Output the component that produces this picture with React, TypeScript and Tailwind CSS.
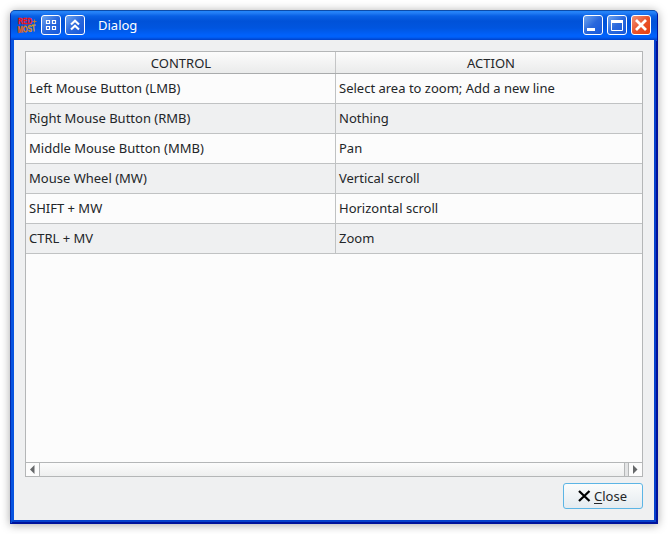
import React from "react";

const rows: [string, string][] = [
  ["Left Mouse Button (LMB)", "Select area to zoom; Add a new line"],
  ["Right Mouse Button (RMB)", "Nothing"],
  ["Middle Mouse Button (MMB)", "Pan"],
  ["Mouse Wheel (MW)", "Vertical scroll"],
  ["SHIFT + MW", "Horizontal scroll"],
  ["CTRL + MV", "Zoom"],
];

function AppLogo() {
  return (
    <svg width="20" height="22" viewBox="0 -1 20 22" className="shrink-0 overflow-visible">
      <defs>
        <linearGradient id="fire" x1="0" y1="0" x2="1" y2="0">
          <stop offset="0" stopColor="#ee5210" />
          <stop offset="1" stopColor="#cfa822" />
        </linearGradient>
      </defs>
      <g fontFamily="Liberation Sans, sans-serif" fontWeight="bold">
        <text x="1" y="8.5" fontSize="9" textLength="14" lengthAdjust="spacingAndGlyphs" fill="#f51414" stroke="#f51414" strokeWidth="0.4">RED</text>
        <text x="0.8" y="18" fontSize="9.5" textLength="18" lengthAdjust="spacingAndGlyphs" fill="url(#fire)" stroke="url(#fire)" strokeWidth="0.4" transform="rotate(-6 1 17)">MOST</text>
      </g>
      <path d="M15.5 6.5h4M17.5 4.5v4" stroke="#c07a35" />
    </svg>
  );
}

function TitleButton({ red, children }: { red?: boolean; children: React.ReactNode }) {
  return (
    <button
      className={
        "h-5 w-5 shrink-0 rounded-[3px] border border-white " +
        (red
          ? "bg-linear-to-br from-[#ef9278] via-[#e9532b] to-[#e8400c]"
          : "bg-linear-to-br from-[#6fa4ee] via-[#2a68dc] to-[#1558dc]")
      }
    >
      <svg width="18" height="18" viewBox="0 0 18 18" fill="none" className="block">
        {children}
      </svg>
    </button>
  );
}

export default function App() {
  return (
    <div className="h-[534px] w-[668px] overflow-hidden bg-white p-[10px] font-['Noto_Sans',sans-serif] text-[13px] text-[#232629]">
      <div className="flex h-[514px] w-[648px] flex-col overflow-hidden rounded-t-[5px] border border-[#0029ad] border-t-[#0c4ca9] border-r-[#00129b] border-b-[#00129b] bg-[#0653e0] shadow-[0_1px_10px_rgba(0,0,0,0.35)]">
        <header className="flex h-[29px] shrink-0 items-center bg-[linear-gradient(180deg,#2386fc_0px,#227df5_2px,#0860e5_5px,#0052d8_10px,#0055df_17px,#0061fb_24px,#0061fb_26px,#0041c8_29px)] pr-[6px] pb-px pl-[6px]">
          <AppLogo />
          <div className="flex gap-1 pl-1">
            <TitleButton>
              <path d="M4.5 4.5h3v3h-3zM10.5 4.5h3v3h-3zM4.5 10.5h3v3h-3zM10.5 10.5h3v3h-3z" stroke="white" strokeWidth="1.2" />
            </TitleButton>
            <TitleButton>
              <path d="M5 8.5l4-3.7 4 3.7M5 13.5l4-3.7 4 3.7" stroke="white" strokeWidth="2.2" />
            </TitleButton>
          </div>
          <span className="pt-[2px] pl-[13px] text-white">Dialog</span>
          <div className="ml-auto flex gap-1">
            <TitleButton>
              <path d="M3 12h8v3H3z" fill="white" />
            </TitleButton>
            <TitleButton>
              <path d="M3.5 4.5h11v10h-11z" stroke="white" />
              <path d="M3 4h12v3H3z" fill="white" />
            </TitleButton>
            <TitleButton red>
              <path d="M4 4l10 10M14 4L4 14" stroke="white" strokeWidth="2.8" />
            </TitleButton>
          </div>
        </header>

        <div className="flex min-h-0 flex-1">
          <div className="mr-px mb-px flex flex-1 border-r-2 border-b-2 border-l-[3px] border-r-[#0641cc] border-b-[#0641cc] border-l-[#0653e0] shadow-[1px_1px_0_#00129b]">
            <main className="flex flex-1 flex-col bg-[#eff0f1] px-[11px] pt-[11px]">
              <section className="flex h-[426px] flex-col border border-[#b4b6b7] bg-[#fcfcfc]">
                <div className="flex h-[22px] border-b border-[#a9abac] bg-linear-to-b from-[#fcfcfc] to-[#eaebeb] text-center leading-[22px]">
                  <div className="w-[310px] border-r border-[#c4c5c6] pl-px">CONTROL</div>
                  <div className="flex-1 pl-1">ACTION</div>
                </div>
                {rows.map(([control, action], i) => (
                  <div
                    key={control}
                    className={"flex h-[30px] border-b border-[#c0c2c3] leading-[29px] " + (i % 2 ? "bg-[#eff0f1]" : "bg-[#fcfcfc]")}
                  >
                    <div className="w-[310px] border-r border-[#c0c2c3] pl-[3px]">{control}</div>
                    <div className="flex-1 pl-[3px]">{action}</div>
                  </div>
                ))}
                <div className="mt-auto flex h-[14px] border-t border-[#b4b6b7] bg-linear-to-b from-[#fcfcfc] to-[#eeefef]">
                  <div className="w-[14px] border-r border-[#b4b6b7] bg-[#fcfcfc]">
                    <svg width="13" height="13"><path d="M8.5 2v9L4 6.5z" fill="#66686a" /></svg>
                  </div>
                  <div className="flex-1" />
                  <div className="w-[5px] border-r border-l border-[#b4b6b7] bg-[#e3e4e5]" />
                  <div className="w-[13px] bg-[#fcfcfc]">
                    <svg width="13" height="13"><path d="M4 2v9l4.5-4.5z" fill="#66686a" /></svg>
                  </div>
                </div>
              </section>
              <button className="mt-[6px] ml-auto flex h-[26px] w-20 items-center rounded-[3px] border border-[#5cb5e5] bg-linear-to-b from-[#fbfcfc] to-[#e4ebf0] pl-[14px]">
                <svg width="13" height="12" viewBox="0 0 13 12" className="shrink-0">
                  <path d="M1 1l10.5 10M11.5 1L1 11" stroke="black" strokeWidth="2.3" />
                </svg>
                <span className="pt-px pl-[3px]">
                  <span className="underline underline-offset-2">C</span>lose
                </span>
              </button>
            </main>
          </div>
        </div>
      </div>
    </div>
  );
}
